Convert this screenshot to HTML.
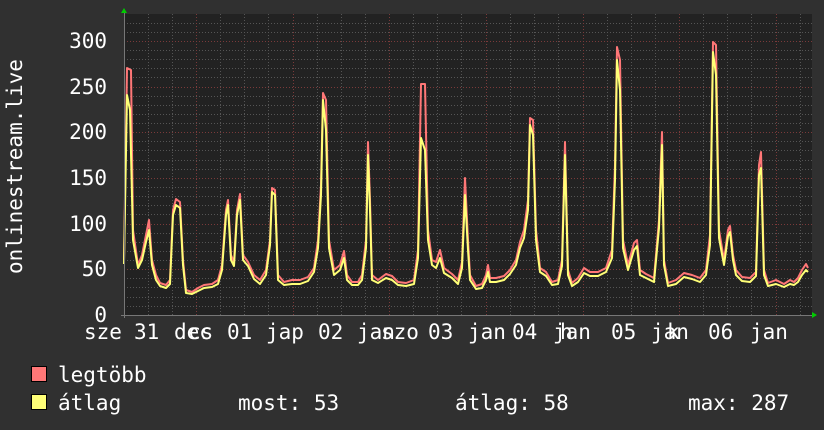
<!DOCTYPE html>
<html><head><meta charset="utf-8"><style>
html,body{margin:0;padding:0;background:#303030;}
svg{display:block;}
text{font-family:"DejaVu Sans Mono","Liberation Mono",monospace;font-size:21px;fill:#fff;}
</style></head><body>
<svg width="824" height="430" viewBox="0 0 824 430" xmlns="http://www.w3.org/2000/svg">
<rect x="0" y="0" width="824" height="430" fill="#303030"/>
<rect x="124" y="14" width="688" height="301" fill="#222"/>
<g stroke-dasharray="1,2" stroke-width="1">
<g stroke="#555">
<path d="M124 23.5H812M124 32.5H812M124 50.5H812M124 59.5H812M124 68.5H812M124 77.5H812M124 96.5H812M124 105.5H812M124 114.5H812M124 123.5H812M124 141.5H812M124 150.5H812M124 160.5H812M124 169.5H812M124 187.5H812M124 196.5H812M124 205.5H812M124 214.5H812M124 233.5H812M124 242.5H812M124 251.5H812M124 260.5H812M124 278.5H812M124 287.5H812M124 297.5H812M124 306.5H812"/>
<path d="M148.5 14V315M172.5 14V315M220.5 14V315M244.5 14V315M268.5 14V315M317.5 14V315M341.5 14V315M365.5 14V315M413.5 14V315M437.5 14V315M461.5 14V315M510.5 14V315M534.5 14V315M558.5 14V315M607.5 14V315M631.5 14V315M655.5 14V315M703.5 14V315M727.5 14V315M751.5 14V315M800.5 14V315"/>
</g>
<g stroke="#7a3a3a">
<path d="M124 41.5H812M124 87.5H812M124 132.5H812M124 178.5H812M124 224.5H812M124 269.5H812"/>
<path d="M196.5 14V315M293.5 14V315M389.5 14V315M486.5 14V315M583.5 14V315M679.5 14V315M776.5 14V315"/>
</g>
</g>
<polyline fill="none" stroke="#ff7777" stroke-width="2" stroke-linejoin="round" points="124,260 127,68 131,70 133,230 138,265 142,255 146,235 149,220 152,260 156,275 160,283 166,285 170,280 173,210 176,199 180,202 183,260 186,290 192,292 198,288 204,285 212,284 218,280 222,265 226,210 228,200 231,255 234,262 237,210 240,194 243,255 248,262 254,275 260,280 266,270 270,240 272,188 275,190 278,275 284,282 292,280 300,280 308,277 314,268 318,240 321,185 323,93 326,100 329,240 334,270 340,265 344,251 347,275 352,282 358,282 362,275 366,240 368,142 370,200 372,275 378,280 386,274 392,276 398,282 406,283 414,280 418,250 421,84 425,84 428,230 432,260 436,262 440,250 444,268 452,274 458,280 462,262 465,178 468,240 470,275 476,286 482,284 486,275 488,265 490,278 496,278 504,276 510,270 516,260 520,242 524,230 528,200 530,118 533,120 536,230 540,268 546,272 552,282 558,280 562,260 565,142 568,270 572,283 578,278 584,268 590,272 598,272 606,268 612,250 615,165 617,47 620,60 623,240 628,265 634,243 637,240 640,270 646,274 654,278 659,220 662,132 664,260 668,283 676,280 684,273 692,275 700,278 706,270 710,235 713,42 716,45 719,230 724,260 728,230 730,226 733,255 736,270 742,277 750,278 756,272 759,165 761,152 764,270 768,283 776,280 784,284 790,280 794,282 798,278 802,270 806,264 808,268"/>
<polyline fill="none" stroke="#ffff77" stroke-width="2" stroke-linejoin="round" points="124,264 127,95 130,110 133,240 138,268 142,260 146,242 149,230 152,265 156,280 160,286 166,288 170,284 173,215 176,205 180,208 183,265 186,293 192,294 198,291 204,288 212,287 218,284 222,270 226,215 228,205 231,260 234,266 237,215 240,200 243,260 248,266 254,279 260,284 266,275 270,245 272,192 275,195 278,280 284,285 292,284 300,284 308,281 314,272 318,248 321,195 323,100 326,130 329,248 334,275 340,270 344,258 347,280 352,285 358,285 362,280 366,248 368,155 370,210 372,280 378,283 386,278 392,280 398,285 406,286 414,284 418,258 421,138 425,150 428,240 432,265 436,268 440,258 444,273 452,278 458,284 462,268 465,195 468,250 470,280 476,289 482,288 486,280 488,272 490,282 496,282 504,280 510,274 516,265 520,248 524,238 528,210 530,125 533,135 536,240 540,272 546,276 552,285 558,284 562,266 565,155 568,275 572,286 578,282 584,273 590,276 598,276 606,272 612,258 615,180 617,60 620,90 623,248 628,270 634,250 637,246 640,275 646,278 654,282 659,228 662,145 664,265 668,286 676,284 684,277 692,279 700,282 706,275 710,245 713,52 716,75 719,238 724,265 728,236 730,232 733,260 736,275 742,281 750,282 756,276 759,175 761,168 764,275 768,286 776,284 784,287 790,284 794,285 798,282 802,275 806,270 808,272"/>
<line x1="124.5" y1="12" x2="124.5" y2="318" stroke="#777"/>
<line x1="121" y1="315.5" x2="814" y2="315.5" stroke="#777"/>
<polygon points="121,13 127,13 124,8" fill="#00cc00"/>
<polygon points="812,312 812,318 817,315" fill="#00cc00"/>
<g text-anchor="end">
<text x="107" y="48">300</text>
<text x="107" y="94">250</text>
<text x="107" y="139">200</text>
<text x="107" y="185">150</text>
<text x="107" y="231">100</text>
<text x="107" y="276">50</text>
<text x="107" y="322">0</text>
</g>
<text transform="translate(22,274) rotate(-90)">onlinestream.live</text>
<g>
<text x="84" y="339">sze</text>
<text x="134" y="339">31</text>
<text x="174" y="339">dec</text>
<text x="188" y="339">cs</text>
<text x="227" y="339">01</text>
<text x="266" y="339">jap</text>
<text x="318" y="339">02</text>
<text x="357" y="339">jan</text>
<text x="381" y="339">szo</text>
<text x="428" y="339">03</text>
<text x="468" y="339">jan</text>
<text x="512" y="339">04</text>
<text x="553" y="339">jan</text>
<text x="560" y="339">h</text>
<text x="611" y="339">05</text>
<text x="651" y="339">jan</text>
<text x="667" y="339">k</text>
<text x="708" y="339">06</text>
<text x="750" y="339">jan</text>
</g>
<rect x="31.5" y="366.5" width="15" height="15" fill="#ff7777" stroke="#000"/>
<rect x="31.5" y="394.5" width="15" height="15" fill="#ffff77" stroke="#000"/>
<text x="58" y="382">legtöbb</text>
<text x="58" y="410">átlag</text>
<text x="238" y="410">most: 53</text>
<text x="455" y="410">átlag: 58</text>
<text x="688" y="410">max: 287</text>
</svg>
</body></html>
